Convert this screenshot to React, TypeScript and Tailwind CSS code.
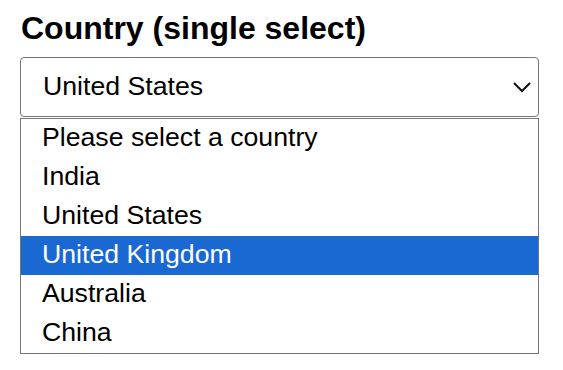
const countries = ["Please select a country", "India", "United States", "United Kingdom", "Australia", "China"];

export default function App() {
  const highlighted = "United Kingdom";

  return (
    <div className="min-h-screen bg-white px-[20px] pt-[10px] text-black font-['Liberation_Sans',Arial,sans-serif]">
      <h1 className="text-[32px] font-bold leading-[37px] pl-px">Country (single select)</h1>

      <div className="mt-[10px] w-[519px]">
        <div className="flex h-[60px] items-center justify-between rounded-[4px] border border-[#767676] pb-[2px] pl-[22px] pr-[6px]">
          <span className="text-[26.67px]">United States</span>
          <svg width="20" height="12" viewBox="0 0 20 12" fill="none" className="mt-[2px]">
            <path d="M2 2 L10 10 L18 2" stroke="#111" strokeWidth="2" />
          </svg>
        </div>

        <ul className="mt-px border border-[#767676]">
          {countries.map((c) => (
            <li
              key={c}
              className={
                c === highlighted
                  ? "flex h-[39px] items-center bg-[#1a68d2] pb-[4px] pl-[21px] text-[26.67px] text-white"
                  : "flex h-[39px] items-center pb-[4px] pl-[21px] text-[26.67px]"
              }
            >
              {c}
            </li>
          ))}
        </ul>
      </div>
    </div>
  );
}
